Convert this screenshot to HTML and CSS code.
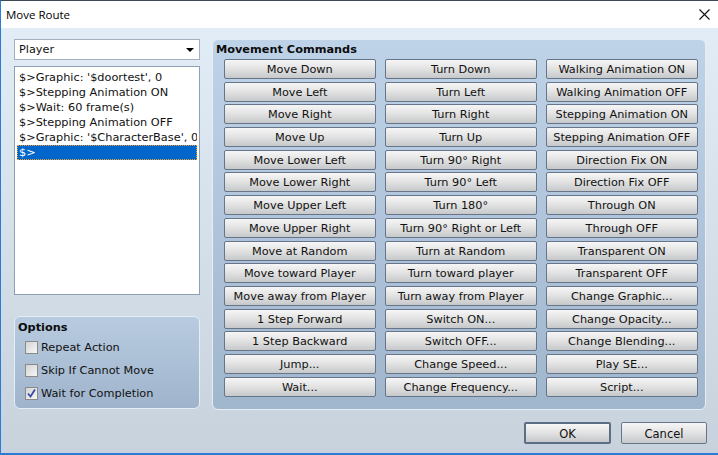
FILE: index.html
```html
<!DOCTYPE html>
<html lang="en">
<head>
  <meta charset="UTF-8">
  <title>Move Route</title>
  <link rel="stylesheet" href="styles.css">
</head>
<body>
  <div class="window">
    <div class="titlebar">
      <span class="title">Move Route</span>
      <svg class="close" width="11" height="11" viewBox="0 0 11 11"><path d="M0.5 0.5 L10.5 10.5 M10.5 0.5 L0.5 10.5" stroke="#111" stroke-width="1.1" fill="none"/></svg>
    </div>

    <div class="content">
      <div class="left">
        <div class="select">
          <span>Player</span>
          <svg width="8" height="4" viewBox="0 0 8 4"><path d="M0 0 H8 L4 4 Z" fill="#000"/></svg>
        </div>
        <ul class="route">
          <li>$&gt;Graphic: '$doortest', 0</li>
          <li>$&gt;Stepping Animation ON</li>
          <li>$&gt;Wait: 60 frame(s)</li>
          <li>$&gt;Stepping Animation OFF</li>
          <li>$&gt;Graphic: '$CharacterBase', 0</li>
          <li class="selected">$&gt;</li>
        </ul>
        <div class="options">
          <h2>Options</h2>
          <label class="check"><span class="box"></span>Repeat Action</label>
          <label class="check"><span class="box"></span>Skip If Cannot Move</label>
          <label class="check"><span class="box checked"><svg width="11" height="11" viewBox="0 0 11 11"><path d="M2 5.5 L4.5 8.5 L9 1.5" stroke="#3949a8" stroke-width="1.8" fill="none"/></svg></span>Wait for Completion</label>
        </div>
      </div>

      <div class="commands">
        <h2>Movement Commands</h2>
        <div class="grid">
          <button>Move Down</button>
          <button>Move Left</button>
          <button>Move Right</button>
          <button>Move Up</button>
          <button>Move Lower Left</button>
          <button>Move Lower Right</button>
          <button>Move Upper Left</button>
          <button>Move Upper Right</button>
          <button>Move at Random</button>
          <button>Move toward Player</button>
          <button>Move away from Player</button>
          <button>1 Step Forward</button>
          <button>1 Step Backward</button>
          <button>Jump...</button>
          <button>Wait...</button>

          <button>Turn Down</button>
          <button>Turn Left</button>
          <button>Turn Right</button>
          <button>Turn Up</button>
          <button>Turn 90° Right</button>
          <button>Turn 90° Left</button>
          <button>Turn 180°</button>
          <button>Turn 90° Right or Left</button>
          <button>Turn at Random</button>
          <button>Turn toward player</button>
          <button>Turn away from Player</button>
          <button>Switch ON...</button>
          <button>Switch OFF...</button>
          <button>Change Speed...</button>
          <button>Change Frequency...</button>

          <button>Walking Animation ON</button>
          <button>Walking Animation OFF</button>
          <button>Stepping Animation ON</button>
          <button>Stepping Animation OFF</button>
          <button>Direction Fix ON</button>
          <button>Direction Fix OFF</button>
          <button>Through ON</button>
          <button>Through OFF</button>
          <button>Transparent ON</button>
          <button>Transparent OFF</button>
          <button>Change Graphic...</button>
          <button>Change Opacity...</button>
          <button>Change Blending...</button>
          <button>Play SE...</button>
          <button>Script...</button>
        </div>
      </div>
    </div>

    <div class="footer">
      <button class="default">OK</button>
      <button>Cancel</button>
    </div>
  </div>
</body>
</html>
```

FILE: styles.css
```css
body {
  margin: 0;
  font-family: "DejaVu Sans", sans-serif;
  font-size: 11.3px;
  color: #111;
}

.window {
  width: 718px;
  height: 455px;
  box-sizing: border-box;
  border-top: 1px solid #3c4a58;
  border-left: 1px solid #2b7bd6;
  border-bottom: 2px solid #2b7bd6;
  background: linear-gradient(#e4eef9, #d5e0eb 50%, #c8d2dc);
  overflow: hidden;
}

.titlebar {
  height: 27px;
  background: #fff;
  display: flex;
  align-items: center;
  justify-content: space-between;
  padding: 0 8px 0 5px;
}

.title {
  font-family: "Open Sans", "Noto Sans", sans-serif;
  font-size: 11.5px;
  color: #000;
}

.content {
  display: flex;
  gap: 12px;
  padding: 11px 0 0 13px;
}

.left {
  width: 186px;
  display: flex;
  flex-direction: column;
}

.select {
  height: 21px;
  box-sizing: border-box;
  border: 1px solid #a3b0bf;
  background: #fff;
  display: flex;
  align-items: center;
  justify-content: space-between;
  padding: 0 5px 0 4px;
}

.route {
  list-style: none;
  margin: 6px 0 0;
  padding: 3px 2px 0;
  height: 229px;
  box-sizing: border-box;
  border: 1px solid #8ea0b4;
  background: #fff;
}

.route li {
  height: 15px;
  line-height: 15px;
  padding-left: 2px;
  white-space: nowrap;
  overflow: hidden;
}

.route li.selected {
  background: #0066cc;
  color: #fff;
  outline: 1px dotted #f0a030;
  outline-offset: -1px;
}

.options {
  margin-top: 21px;
  height: 93px;
  box-sizing: border-box;
  border: 1px solid #e6edf5;
  border-radius: 6px;
  background: linear-gradient(#b8cbe0, #9fb4cc);
  padding: 4px 0 0 3px;
}

h2 {
  margin: 0;
  font-size: 11.3px;
  font-weight: bold;
  color: #0c0c0c;
}

.check {
  display: flex;
  align-items: center;
  gap: 3px;
  height: 23px;
  margin-left: 7px;
}

.options h2 {
  margin-bottom: 2px;
}

.box {
  width: 13px;
  height: 13px;
  box-sizing: border-box;
  border: 1px solid #8a8a8a;
  background: linear-gradient(135deg, #d4d4d4, #f6f6f6);
  display: flex;
  align-items: center;
  justify-content: center;
}

.commands {
  width: 494px;
  height: 371px;
  box-sizing: border-box;
  border: 1px solid #e6edf5;
  border-radius: 6px;
  background: linear-gradient(#bfd3e8, #a0b6cd);
  padding: 3px 0 0 3px;
}

.grid {
  display: grid;
  grid-auto-flow: column;
  grid-template-columns: repeat(3, 151.5px);
  grid-template-rows: repeat(15, 20px);
  column-gap: 9.5px;
  row-gap: 2.7px;
  margin: 3px 0 0 8px;
}

button {
  font-family: inherit;
  font-size: 11.3px;
  color: #111;
  padding: 1px 0 0;
  border: 1px solid #66758a;
  border-radius: 2px;
  background: linear-gradient(#f6f6f6, #e4e4e4 45%, #c6c8ca);
  white-space: nowrap;
}

.footer {
  display: flex;
  justify-content: flex-end;
  gap: 10px;
  margin: 12px 11px 0 0;
}

.footer button {
  width: 86px;
  height: 22px;
  font-size: 11.5px;
}

.footer button.default {
  width: 87px;
  border: 2px solid #5c6e86;
}
```
